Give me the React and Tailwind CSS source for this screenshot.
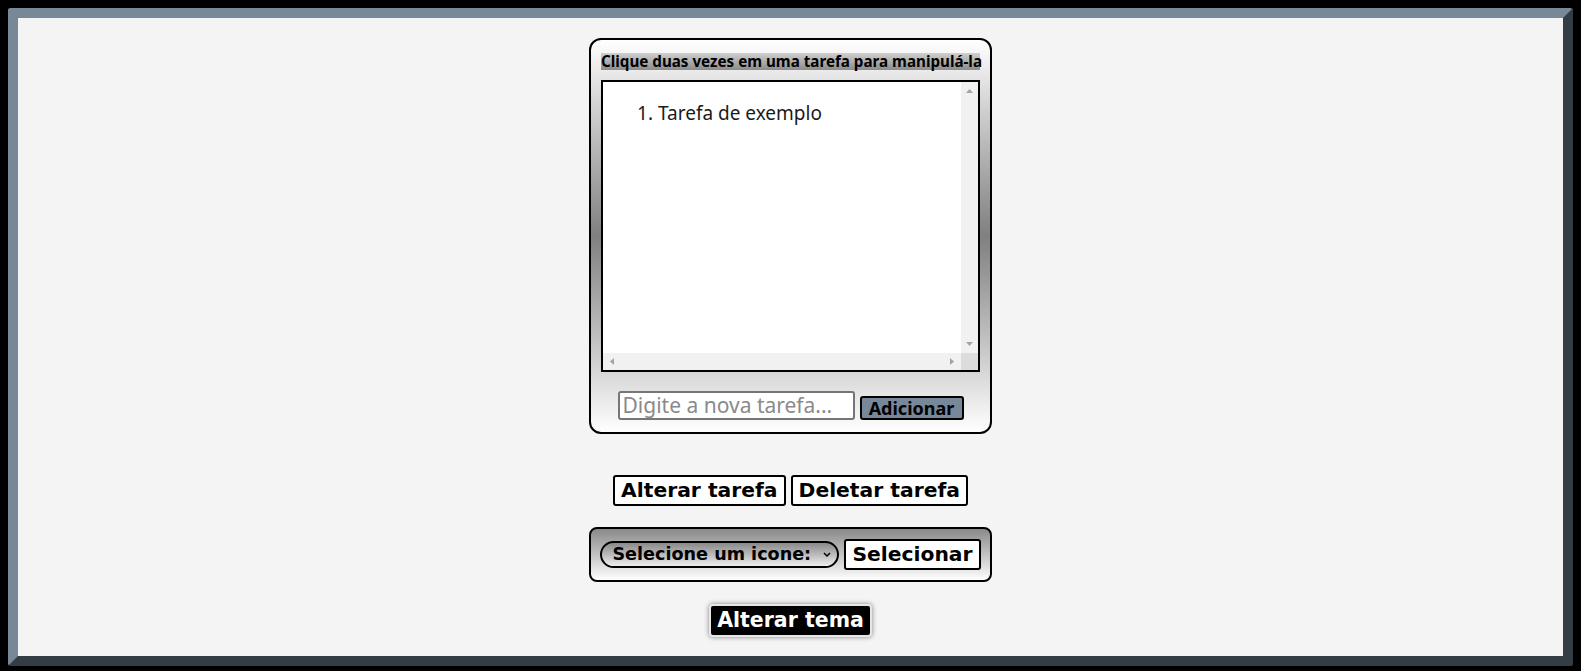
import React from 'react';

const Arrow = ({ dir }) => {
  const paths = {
    up: 'M0 5 L3.5 1 L7 5 Z',
    down: 'M0 1 L3.5 5 L7 1 Z',
    left: 'M5 0 L1 3.5 L5 7 Z',
    right: 'M1 0 L5 3.5 L1 7 Z',
  };
  const w = dir === 'up' || dir === 'down' ? 7 : 6;
  const h = dir === 'up' || dir === 'down' ? 6 : 7;
  return (
    <svg width={w} height={h} viewBox={`0 0 ${w} ${h}`}>
      <path d={paths[dir]} fill="#a3a3a3" />
    </svg>
  );
};

const App = () => {
  return (
    <div className="bg-black h-[671px] pt-2 px-2 overflow-hidden">
      <div className="h-[658px] rounded-[3px] border-[10px] border-t-[#778899] border-l-[#778899] border-b-[#343d46] border-r-[#343d46] bg-[#f4f4f4] flex flex-col items-center">
        {/* Task card */}
        <div className="mt-[20px] w-[403px] h-[396px] border-2 border-black rounded-[12px] bg-gradient-to-b from-white via-[#808080] to-white flex flex-col items-center pt-[13px] px-[10px]">
          <div className="w-full h-[17px] bg-gradient-to-b from-[#d0d0d0] to-[#8c8c8c] text-[15.2px] leading-[17px] font-bold text-black font-['Noto_Sans','Open_Sans',sans-serif] whitespace-nowrap">
            Clique duas vezes em uma tarefa para manipulá-la
          </div>
          <div className="mt-[10px] w-full h-[292px] border-2 border-black bg-white flex flex-col overflow-hidden">
            <div className="flex flex-1 min-h-0">
              <ol className="flex-1 list-decimal pl-[55px] pt-[19px] text-[19px] leading-[24px] text-[#1a1a1a] font-['Noto_Sans','Open_Sans',sans-serif]">
                <li>Tarefa de exemplo</li>
              </ol>
              <div className="w-[17px] bg-[#f1f1f1] flex flex-col items-center justify-between py-[6px]">
                <Arrow dir="up" />
                <Arrow dir="down" />
              </div>
            </div>
            <div className="h-[17px] flex">
              <div className="flex-1 bg-[#f1f1f1] flex items-center justify-between px-[6px]">
                <Arrow dir="left" />
                <Arrow dir="right" />
              </div>
              <div className="w-[17px] bg-[#dcdcdc]" />
            </div>
          </div>
          <div className="mt-[19px] flex items-end gap-[5px]">
            <input
              type="text"
              placeholder="Digite a nova tarefa..."
              className="w-[237px] h-[29px] border-2 border-[#767676] rounded-[3px] bg-white px-[3px] text-[21px] placeholder:text-[#8a8a8a] font-['Noto_Sans','Open_Sans',sans-serif] outline-none"
            />
            <button className="w-[104px] h-[24px] bg-[#778899] border-2 border-black rounded-[3px] text-[18px] leading-[20px] font-bold text-black font-['Noto_Sans','Open_Sans',sans-serif]">
              Adicionar
            </button>
          </div>
        </div>

        {/* Task actions */}
        <div className="mt-[41px] flex gap-[5px]">
          <button className="h-[31px] px-[6px] bg-white border-2 border-black rounded-[3px] text-[20.3px] leading-[27px] font-bold text-black font-['DejaVu_Sans',sans-serif]">
            Alterar tarefa
          </button>
          <button className="h-[31px] px-[6px] bg-white border-2 border-black rounded-[3px] text-[20.3px] leading-[27px] font-bold text-black font-['DejaVu_Sans',sans-serif]">
            Deletar tarefa
          </button>
        </div>

        {/* Icon picker */}
        <div className="mt-[21px] w-[403px] h-[55px] border-2 border-black rounded-[8px] bg-gradient-to-b from-[#8a8a8a] to-white flex items-center justify-center gap-[5px]">
          <div className="relative h-[27px] w-[239px] rounded-full border-2 border-black bg-gradient-to-b from-[#8a8a8a] to-[#eeeeee] flex items-center pl-[10px]">
            <span className="text-[17.6px] font-bold text-black font-['DejaVu_Sans',sans-serif] whitespace-nowrap">Selecione um icone:</span>
            <svg className="absolute right-[6px] top-[9px]" width="8" height="6" viewBox="0 0 8 6">
              <path d="M1 1 L4 4 L7 1" fill="none" stroke="black" strokeWidth="1.5" />
            </svg>
          </div>
          <button className="h-[31px] px-[6px] bg-white border-2 border-black rounded-[3px] text-[20.3px] leading-[27px] font-bold text-black font-['DejaVu_Sans',sans-serif]">
            Selecionar
          </button>
        </div>

        {/* Theme */}
        <button className="mt-[22px] h-[33px] px-[6px] bg-black border-2 border-[#e6e6e6] rounded-[4px] shadow-[0_0_5px_#808080] text-[20.5px] leading-[27px] font-bold text-white font-['DejaVu_Sans',sans-serif]">
          Alterar tema
        </button>
      </div>
    </div>
  );
};

export default App;
